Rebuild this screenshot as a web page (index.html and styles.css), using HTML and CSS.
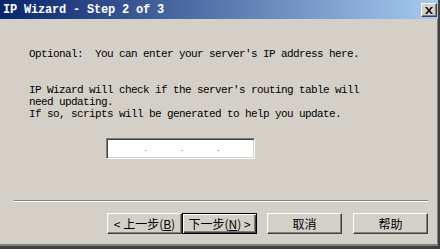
FILE: index.html
```html
<!DOCTYPE html>
<html lang="zh-CN">
<head>
    <meta charset="UTF-8">
    <title>IP Wizard - Step 2 of 3</title>
    <link rel="stylesheet" href="styles.css">
</head>
<body>
    <div class="window">
        <div class="titlebar">
            <span class="title">IP Wizard - Step 2 of 3</span>
            <button class="close" title="Close">
                <svg width="8" height="7" viewBox="0 0 8 7">
                    <path d="M0 0h2l2 2.5L6 0h2L5 3.5 8 7H6L4 4.5 2 7H0l3-3.5z" fill="#000"/>
                </svg>
            </button>
        </div>

        <div class="content">
            <p class="msg">Optional:  You can enter your server's IP address here.</p>
            <p class="msg info">IP Wizard will check if the server's routing table will<br>need updating.<br>If so, scripts will be generated to help you update.</p>

            <div class="ipbox">
                <span class="octet"></span><span class="dot">.</span>
                <span class="octet"></span><span class="dot">.</span>
                <span class="octet"></span><span class="dot">.</span>
                <span class="octet"></span>
            </div>
        </div>

        <div class="separator"></div>

        <div class="buttons">
            <button class="btn">&lt;&nbsp;上一步(<u>B</u>)</button>
            <button class="btn default">下一步(<u>N</u>)&nbsp;&gt;</button>
            <button class="btn spaced">取消</button>
            <button class="btn spaced">帮助</button>
        </div>
    </div>
</body>
</html>
```

FILE: styles.css
```css
body {
    margin: 0;
    background: #d4d0c8;
}
.window {
    box-sizing: border-box;
    width: 440px;
    height: 249px;
    background: #d4d0c8;
    border-right: 2px solid #404040;
    border-bottom: 3px solid #404040;
    box-shadow: inset -1px -2px #808080;
    display: flex;
    flex-direction: column;
}
.titlebar {
    height: 19px;
    display: flex;
    justify-content: space-between;
    align-items: flex-start;
    padding: 3px 1px 0 3px;
    box-sizing: border-box;
    background: linear-gradient(to right, #0a246a, #a6caf0);
}
.title {
    font-family: "Liberation Mono", monospace;
    font-weight: bold;
    font-size: 12px;
    letter-spacing: -0.2px;
    line-height: 14px;
    color: #fff;
    white-space: pre;
}
.close {
    width: 16px;
    height: 14px;
    padding: 0;
    background: #d4d0c8;
    border: 1px solid;
    border-color: #fff #404040 #404040 #fff;
    box-shadow: inset -1px -1px #808080;
    display: flex;
    align-items: center;
    justify-content: center;
}
.content {
    padding: 29px 0 0 29px;
    font-family: "Liberation Mono", monospace;
    font-size: 11px;
    letter-spacing: -0.6px;
    line-height: 12px;
    color: #000;
}
.msg {
    margin: 0;
    white-space: pre;
}
.info {
    margin-top: 24px;
}
.ipbox {
    box-sizing: border-box;
    width: 149px;
    height: 21px;
    margin: 18px 0 0 77px;
    background: #fff;
    border: 1px solid;
    border-color: #808080 #fff #fff #808080;
    box-shadow: inset 1px 1px #404040, inset -1px -1px #d4d0c8;
    display: flex;
    align-items: center;
    padding-left: 2px;
}
.octet {
    width: 36px;
}
.dot {
    width: 1px;
    font-family: "Liberation Sans", sans-serif;
    font-size: 8px;
    letter-spacing: 0;
    line-height: 8px;
}
.separator {
    margin: 41px 10px 0 14px;
    height: 1px;
    background: #808080;
    border-bottom: 1px solid #fff;
}
.buttons {
    display: flex;
    justify-content: flex-end;
    padding: 11px 10px 0 0;
}
.btn {
    box-sizing: border-box;
    width: 75px;
    height: 21px;
    padding: 0;
    font-family: "Noto Sans CJK SC", sans-serif;
    font-size: 12px;
    line-height: 12px;
    color: #000;
    background: #d4d0c8;
    border: 1px solid;
    border-color: #fff #404040 #404040 #fff;
    box-shadow: inset -1px -1px #808080;
}
.btn.default {
    border-color: #000;
    box-shadow: inset 1px 1px #fff, inset -1px -1px #404040, inset -2px -2px #808080;
}
.btn.spaced {
    margin-left: 10px;
}
.btn.spaced:last-child {
    margin-left: 11px;
}
```
